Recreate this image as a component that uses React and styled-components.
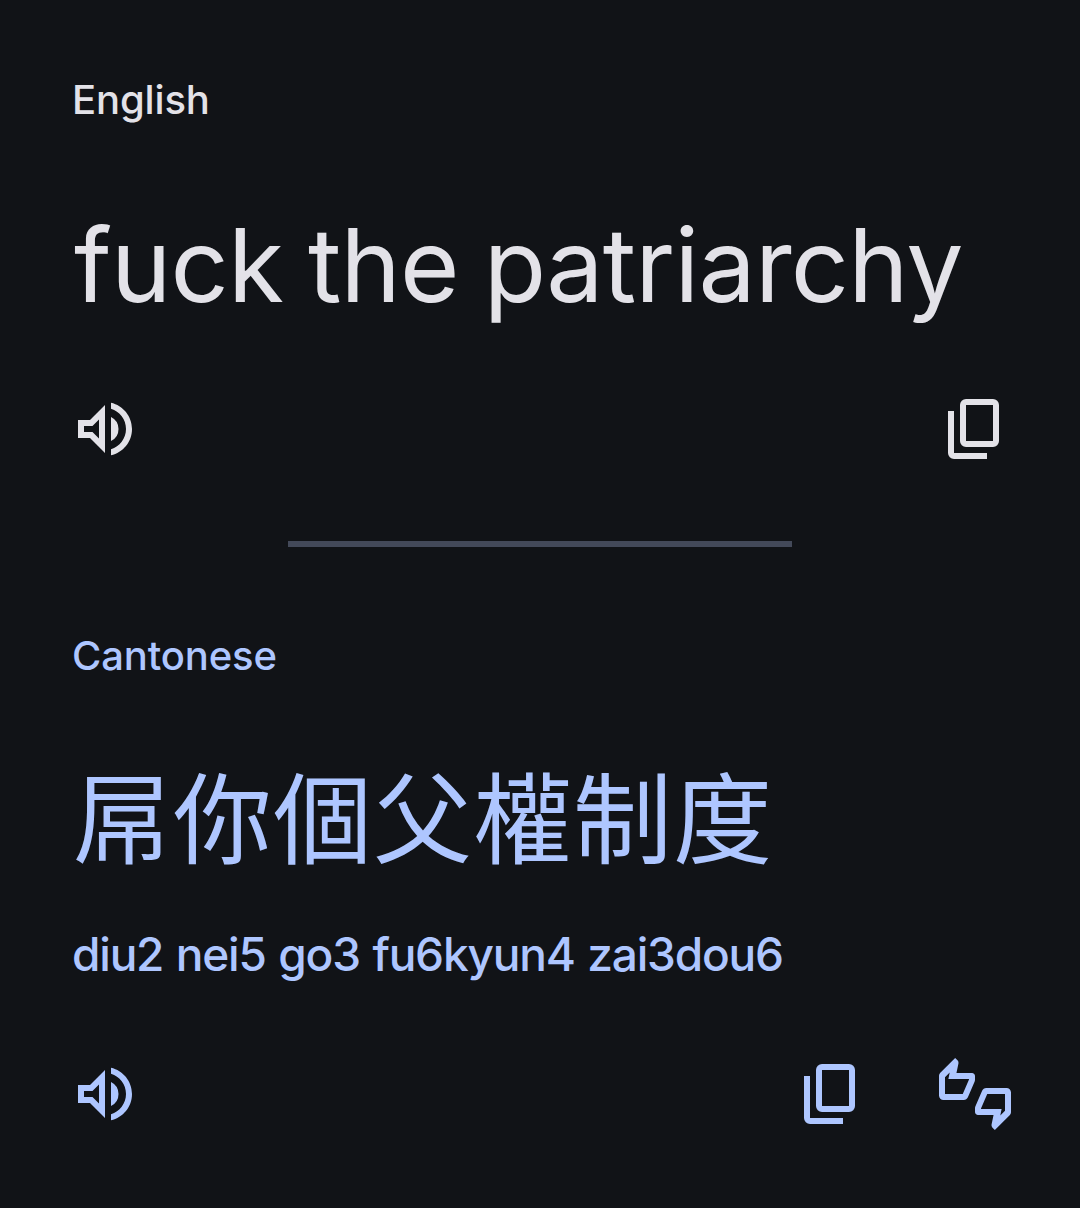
import React from 'react';
import styled, { createGlobalStyle, ThemeProvider } from 'styled-components';

const theme = {
  background: '#111317',
  foreground: '#e3e2e8',
  accent: '#aec6ff',
  divider: '#434959'
};

const GlobalStyle = createGlobalStyle`
  * {
    box-sizing: border-box;
  }

  body {
    margin: 0;
    background-color: ${theme.background};
  }
`;

const Screen = styled.main`
  display: flex;
  flex-direction: column;
  width: 1080px;
  height: 1208px;
  overflow: hidden;
  background-color: ${props => props.theme.background};
  font-family: Inter, 'Noto Sans CJK TC', sans-serif;
`;

const Section = styled.section`
  display: flex;
  flex-direction: column;
  padding: ${props => props.$top}px 69px 0;
  color: ${props => (props.$accent ? props.theme.accent : props.theme.foreground)};
`;

const Text = styled.p`
  margin: 0;
  padding-left: 3px;
  white-space: nowrap;
`;

const Language = styled(Text)`
  font-size: 40px;
  font-weight: 500;
  line-height: 60px;
  letter-spacing: -0.15px;
`;

const Phrase = styled(Text)`
  margin-top: 65px;
  padding-left: 5px;
  font-size: 102px;
  font-weight: 400;
  line-height: 140px;
  letter-spacing: -0.8px;
  word-spacing: -3px;
`;

const Translation = styled(Text)`
  margin-top: 57px;
  padding-left: 4px;
  font-family: 'Noto Sans CJK TC', sans-serif;
  font-size: 99px;
  line-height: 140px;
  letter-spacing: 1px;
`;

const Romanization = styled(Text)`
  margin-top: 41px;
  font-size: 46px;
  font-weight: 500;
  line-height: 60px;
  letter-spacing: -1.2px;
  word-spacing: 1.5px;
`;

const Actions = styled.div`
  display: flex;
  align-items: center;
  justify-content: space-between;
  margin-top: ${props => props.$gap}px;
`;

const ActionGroup = styled.div`
  display: flex;
  gap: 72px;
`;

const IconButton = styled.button`
  display: flex;
  padding: 0;
  border: 0;
  background: none;
  color: inherit;
  cursor: pointer;
`;

const Icon = styled.svg`
  width: 72px;
  height: 72px;
  fill: currentColor;
`;

const Divider = styled.hr`
  width: 504px;
  height: 6px;
  margin: 76px auto 0;
  border: 0;
  background-color: ${props => props.theme.divider};
`;

const icons = {
  speak:
    'M3 9v6h4l5 5V4L7 9H3zm7-.17v6.34L7.83 13H5v-2h2.83L10 8.83zM16.5 12A4.5 4.5 0 0 0 14 7.97v8.05A4.47 4.47 0 0 0 16.5 12zM14 3.23v2.06c2.89.86 5 3.54 5 6.71s-2.11 5.85-5 6.71v2.06c4.01-.91 7-4.49 7-8.77s-2.99-7.86-7-8.77z',
  copy:
    'M9 18q-.825 0-1.412-.587T7 16V4q0-.825.588-1.412T9 2h9q.825 0 1.413.588T20 4v12q0 .825-.587 1.413T18 18zm0-2h9V4H9zm-4 6q-.825 0-1.412-.587T3 20V6h2v14h11v2z',
  rate:
    'M12 6c0-.55-.45-1-1-1H5.82l.66-3.18.02-.23c0-.31-.13-.59-.33-.8L5.38 0 .44 4.94C.17 5.21 0 5.59 0 6v6.5c0 .83.67 1.5 1.5 1.5h6.75c.62 0 1.15-.38 1.38-.91l2.26-5.29c.07-.17.11-.36.11-.55V6zm-2 1.13L7.92 12H2V6.42l1.57-1.57L3.13 7H10v.13zM22.5 10h-6.75c-.62 0-1.15.38-1.38.91l-2.26 5.29c-.07.17-.11.36-.11.55V18c0 .55.45 1 1 1h5.18l-.66 3.18-.02.24c0 .31.13.59.33.8l.79.78 4.94-4.94c.27-.27.44-.65.44-1.06v-6.5c0-.83-.67-1.5-1.5-1.5zm-.5 7.58l-1.57 1.57.44-2.15H14v-.13L16.08 12H22v5.58z'
};

const Action = ({ name, label }) => (
  <IconButton type="button" aria-label={label}>
    <Icon viewBox="0 0 24 24" aria-hidden="true">
      <path d={icons[name]} />
    </Icon>
  </IconButton>
);

const App = () => (
  <ThemeProvider theme={theme}>
    <GlobalStyle />
    <Screen>
      <Section $top={70}>
        <Language>English</Language>
        <Phrase>fuck the patriarchy</Phrase>
        <Actions $gap={58}>
          <Action name="speak" label="Listen" />
          <Action name="copy" label="Copy" />
        </Actions>
      </Section>
      <Divider />
      <Section $top={79} $accent>
        <Language>Cantonese</Language>
        <Translation lang="zh-HK">屌你個父權制度</Translation>
        <Romanization>diu2 nei5 go3 fu6kyun4 zai3dou6</Romanization>
        <Actions $gap={74}>
          <Action name="speak" label="Listen" />
          <ActionGroup>
            <Action name="copy" label="Copy" />
            <Action name="rate" label="Rate translation" />
          </ActionGroup>
        </Actions>
      </Section>
    </Screen>
  </ThemeProvider>
);

export default App;
